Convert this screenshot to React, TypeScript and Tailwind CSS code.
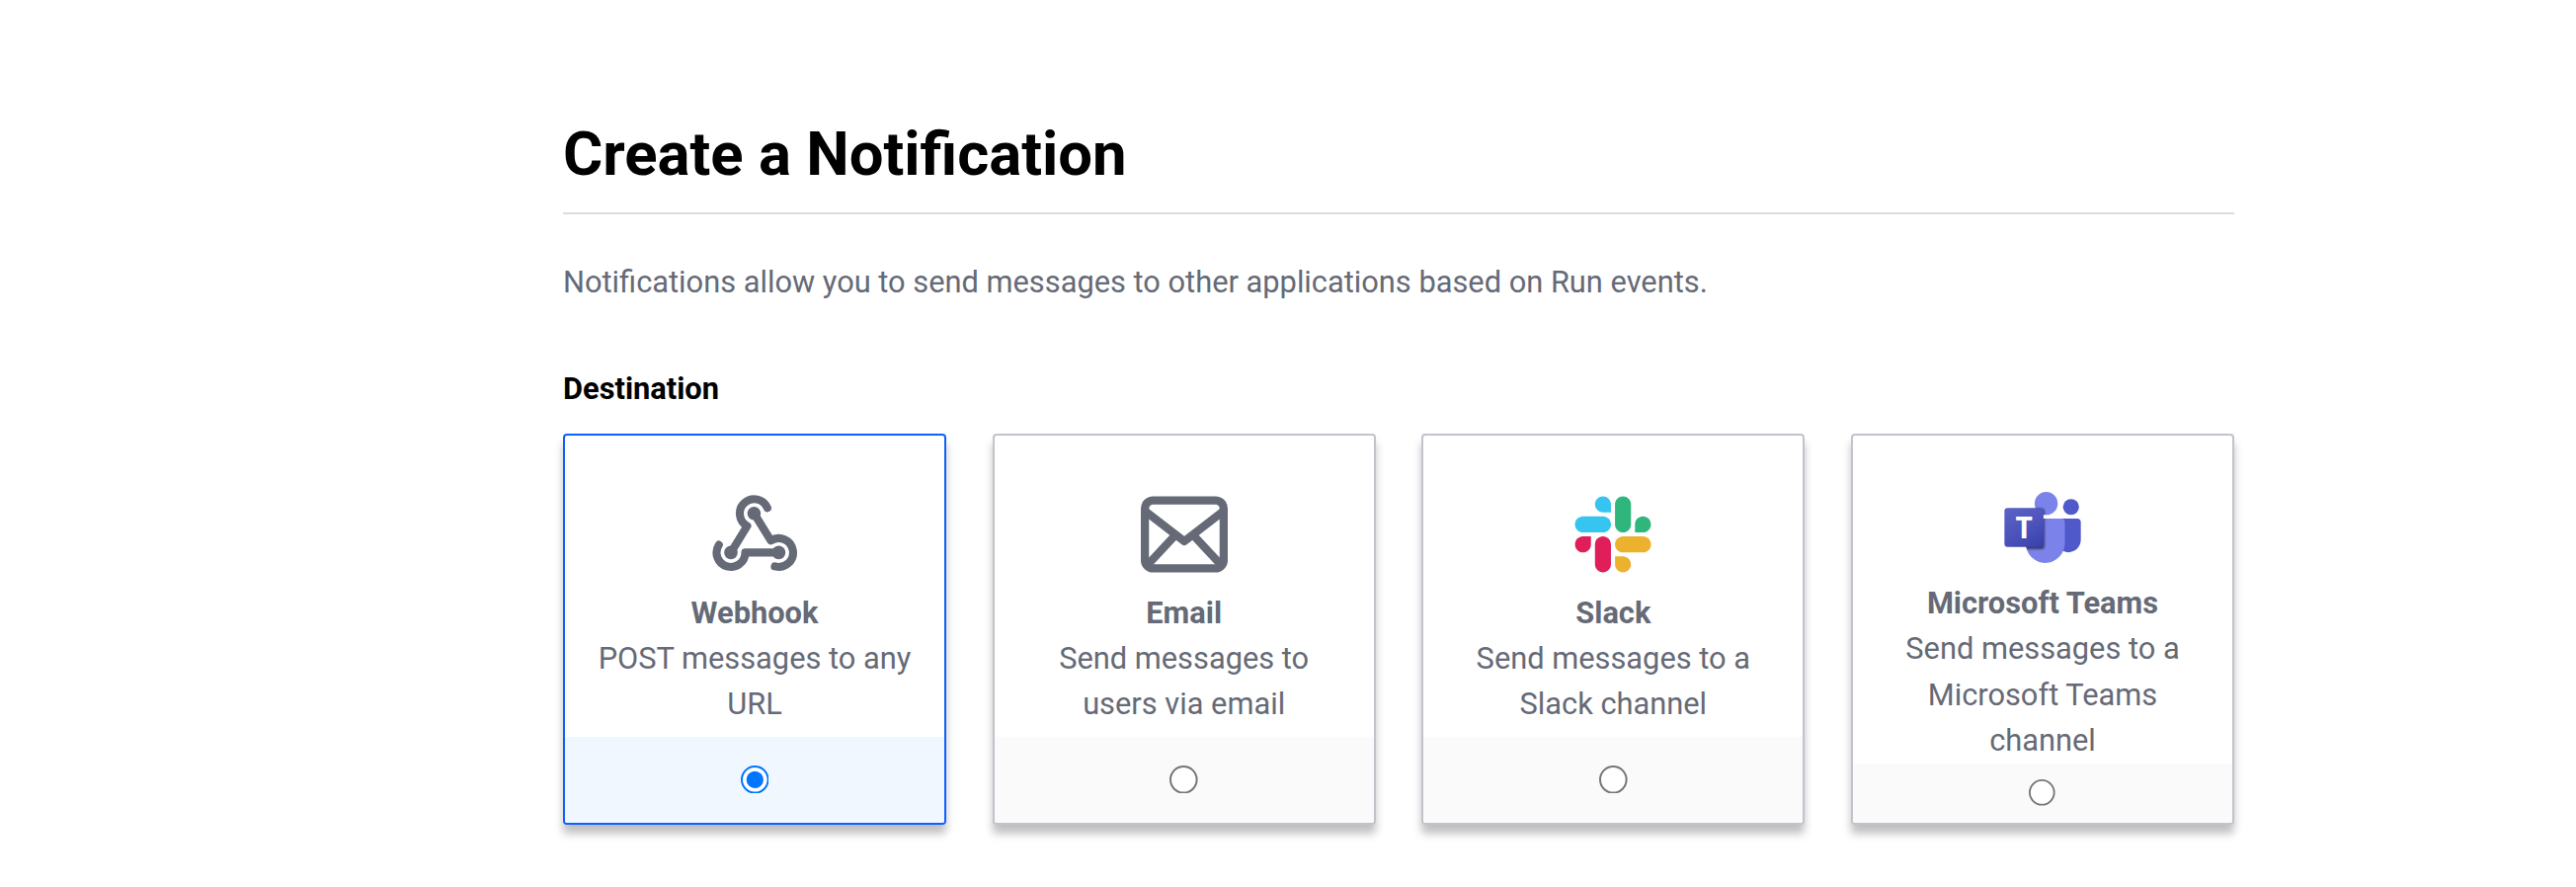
import { useId, type ReactNode } from "react";

type Destination = {
  id: string;
  title: string;
  description: string;
  icon: ReactNode;
  selected?: boolean;
  tall?: boolean;
};

function WebhookIcon() {
  return (
    <svg className="size-[88px] shrink-0" viewBox="0 0 88 88" fill="none" stroke="#656a76" strokeWidth="8.1" strokeLinecap="round" strokeLinejoin="round">
      <path d="M56.9 17.3A14.5 14.5 0 1 0 36.5 35.5L20 62.4" />
      <path d="M43.4 22.7L60.5 50.3A14.5 14.5 0 1 1 64.5 76.4" />
      <path d="M7.8 54.6A14.5 14.5 0 1 0 34.5 62.4H68.4" />
      <g fill="#656a76" stroke="none">
        <circle cx="43.4" cy="22.7" r="6.8" />
        <circle cx="20" cy="62.4" r="6.8" />
        <circle cx="68.4" cy="62.4" r="6.8" />
      </g>
    </svg>
  );
}

function MailIcon() {
  return (
    <svg className="size-[88px] shrink-0" viewBox="0 0 88 88" fill="none" stroke="#656a76" strokeWidth="8.25" strokeLinejoin="round">
      <rect x="4.125" y="9.625" width="79.75" height="68.75" rx="8.25" />
      <path d="M4.1 20.2L44 51L83.9 20.2" />
      <path d="M6.5 75.3L34 45.8M81.5 75.3L54 45.8" />
    </svg>
  );
}

function SlackIcon() {
  return (
    <svg className="size-[88px] shrink-0" viewBox="-8.3 -8.4 143.65 143.65">
      <path fill="#E01E5A" d="M27.2 80c0 7.3-5.9 13.2-13.2 13.2C6.7 93.2.8 87.3.8 80c0-7.3 5.9-13.2 13.2-13.2h13.2V80zm6.6 0c0-7.3 5.9-13.2 13.2-13.2 7.3 0 13.2 5.9 13.2 13.2v33c0 7.3-5.9 13.2-13.2 13.2-7.3 0-13.2-5.9-13.2-13.2V80z" />
      <path fill="#36C5F0" d="M47 27c-7.3 0-13.2-5.9-13.2-13.2C33.8 6.5 39.7.6 47 .6c7.3 0 13.2 5.9 13.2 13.2V27H47zm0 6.7c7.3 0 13.2 5.9 13.2 13.2 0 7.3-5.9 13.2-13.2 13.2H13.9C6.6 60.1.7 54.2.7 46.9c0-7.3 5.9-13.2 13.2-13.2H47z" />
      <path fill="#2EB67D" d="M99.9 46.9c0-7.3 5.9-13.2 13.2-13.2 7.3 0 13.2 5.9 13.2 13.2 0 7.3-5.9 13.2-13.2 13.2H99.9V46.9zm-6.6 0c0 7.3-5.9 13.2-13.2 13.2-7.3 0-13.2-5.9-13.2-13.2V13.8C66.9 6.5 72.8.6 80.1.6c7.3 0 13.2 5.9 13.2 13.2v33.1z" />
      <path fill="#ECB22E" d="M80.1 99.8c7.3 0 13.2 5.9 13.2 13.2 0 7.3-5.9 13.2-13.2 13.2-7.3 0-13.2-5.9-13.2-13.2V99.8h13.2zm0-6.6c-7.3 0-13.2-5.9-13.2-13.2 0-7.3 5.9-13.2 13.2-13.2h33.1c7.3 0 13.2 5.9 13.2 13.2 0 7.3-5.9 13.2-13.2 13.2H80.1z" />
    </svg>
  );
}

const teamsBody =
  "M1667.323,777.5H717.01c-53.743,1.33-96.257,45.931-95.01,99.676v598.105c-7.505,322.519,247.657,590.16,570.167,598.053c322.51-7.893,577.671-275.534,570.167-598.053V877.176C1763.579,823.431,1721.066,778.83,1667.323,777.5z";

function TeamsIcon() {
  const uid = useId();
  return (
    <svg className="size-[88px] shrink-0" viewBox="-154 -317 2537 2537">
      <defs>
        <linearGradient id={`${uid}g`} gradientUnits="userSpaceOnUse" x1="198" y1="392" x2="942" y2="1681">
          <stop offset="0" stopColor="#5a62c3" />
          <stop offset=".5" stopColor="#4d55bd" />
          <stop offset="1" stopColor="#3940ab" />
        </linearGradient>
        <clipPath id={`${uid}c`}>
          <circle cx="1218" cy="337" r="337" />
          <path d={teamsBody} />
        </clipPath>
        <filter id={`${uid}b`}>
          <feGaussianBlur stdDeviation="30" />
        </filter>
      </defs>
      <path fill="#5059C9" d="M1554.637,777.5h575.713c54.391,0,98.483,44.092,98.483,98.483v524.398c0,199.901-162.051,361.952-361.952,361.952h-1.711c-199.901,0.028-361.975-162-362.004-361.901V828.971C1503.167,800.544,1526.211,777.5,1554.637,777.5z" />
      <circle cx="1943.75" cy="440.583" r="233.25" fill="#5059C9" />
      <circle cx="1218.083" cy="336.917" r="336.917" fill="#7B83EB" />
      <path fill="#7B83EB" d={teamsBody} />
      <g clipPath={`url(#${uid}c)`}>
        <rect x="20" y="480" width="1150" height="1190" rx="95" opacity=".55" filter={`url(#${uid}b)`} />
      </g>
      <rect y="466.5" width="1140.3" height="1140.3" rx="95" fill={`url(#${uid}g)`} />
      <text x="570" y="1345.5" textAnchor="middle" fill="#fff" fontSize="865" fontWeight="700" fontFamily='"Open Sans", sans-serif' textLength="500" lengthAdjust="spacingAndGlyphs">
        T
      </text>
    </svg>
  );
}

function Radio({ selected, small }: { selected?: boolean; small?: boolean }) {
  return (
    <svg
      role="radio"
      aria-checked={!!selected}
      className={small ? "mr-px mb-px size-[26.6px]" : "mb-px size-[28.6px]"}
      viewBox="0 0 28.6 28.6"
    >
      <circle cx="14.3" cy="14.3" r="13.3" fill="#fff" stroke={selected ? "#0075ff" : "#767676"} strokeWidth="2" />
      {selected && <circle cx="14.3" cy="14.3" r="8.6" fill="#0075ff" />}
    </svg>
  );
}

function DestinationCard({ title, description, icon, selected, tall }: Destination) {
  return (
    <label
      className={`flex h-[396px] w-[388px] flex-col overflow-hidden rounded-[4px] border-2 bg-white text-center shadow-[0_9px_9px_rgba(0,0,0,0.25)] ${
        selected ? "border-[#1060ff]" : "border-[#c2c3cb]"
      }`}
    >
      <div className={`flex shrink-0 flex-col items-center px-[31px] ${tall ? "h-[332px] pt-[46px]" : "h-[305px] pt-[56px]"}`}>
        {icon}
        <span className="mt-[12.8px] font-bold">{title}</span>
        <span className={tall ? "leading-[46.6px]" : ""}>{description}</span>
      </div>
      <div className={`flex flex-1 items-center justify-center ${selected ? "bg-[#f0f7ff]" : "bg-[#fafafa]"}`}>
        <Radio selected={selected} small={tall} />
      </div>
    </label>
  );
}

const destinations: Destination[] = [
  { id: "webhook", title: "Webhook", description: "POST messages to any URL", icon: <WebhookIcon />, selected: true },
  { id: "email", title: "Email", description: "Send messages to users via email", icon: <MailIcon /> },
  { id: "slack", title: "Slack", description: "Send messages to a Slack channel", icon: <SlackIcon /> },
  { id: "teams", title: "Microsoft Teams", description: "Send messages to a Microsoft Teams channel", icon: <TeamsIcon />, tall: true },
];

export default function App() {
  return (
    <main className="h-[898px] overflow-hidden bg-white pt-[111px] pl-[570px] font-['Roboto',sans-serif] text-[30.8px] leading-[46.2px] text-[#656a76]">
      <div className="w-[1692px]">
        <h1 className="h-[106px] border-b-2 border-[#dcdde3] text-[61.6px] leading-[90px] font-bold text-black">
          Create a Notification
        </h1>
        <p className="mt-[46px]">Notifications allow you to send messages to other applications based on Run events.</p>
        <h2 className="mt-[62px] font-bold text-black">Destination</h2>
        <div className="mt-[21.6px] flex justify-between">
          {destinations.map((d) => (
            <DestinationCard key={d.id} {...d} />
          ))}
        </div>
      </div>
    </main>
  );
}
